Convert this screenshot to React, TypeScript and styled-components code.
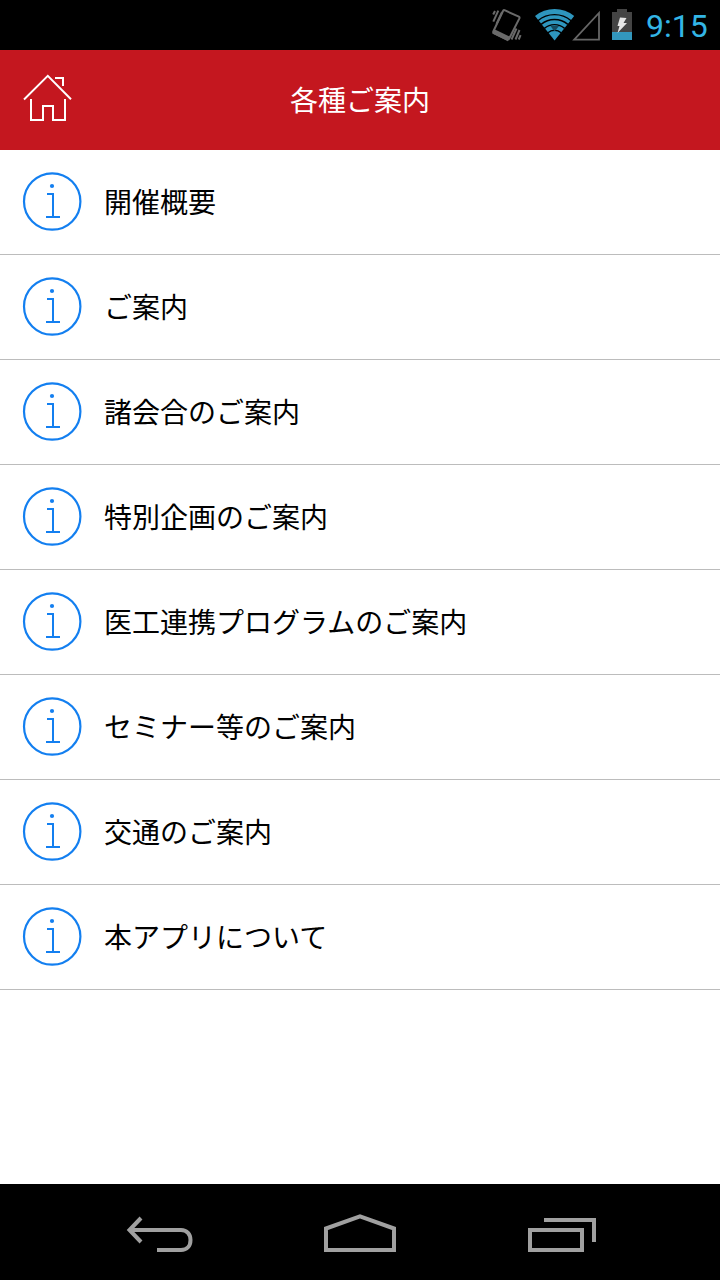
import React from "react";
import styled, { createGlobalStyle } from "styled-components";

const GlobalStyle = createGlobalStyle`
  * { box-sizing: border-box; }
  body { margin: 0; background: #fff; }
`;

const Screen = styled.div`
  width: 720px;
  height: 1280px;
  display: flex;
  flex-direction: column;
  background: #fff;
  font-family: "Noto Sans CJK JP", sans-serif;
`;

const StatusBar = styled.div`
  height: 50px;
  flex: none;
  display: flex;
  align-items: center;
  justify-content: flex-end;
  padding-right: 12px;
  background: #000;
`;

const StatusIcons = styled.svg`
  display: block;
  flex: none;
`;

const Clock = styled.time`
  width: 62px;
  margin-left: 6px;
  font: 400 32px/50px Roboto, sans-serif;
  white-space: nowrap;
  color: #33b5e5;
  padding-top: 1px;
`;

const Header = styled.header`
  height: 100px;
  flex: none;
  display: grid;
  grid-template-columns: 96px 1fr 96px;
  align-items: center;
  background: #c4171f;
  color: #fff;
`;

const HomeButton = styled.button`
  width: 96px;
  height: 100px;
  padding: 0;
  border: 0;
  background: none;
  color: inherit;
  svg { display: block; }
`;

const Title = styled.h1`
  margin: 0 0 3px;
  text-align: center;
  font-size: 28px;
  font-weight: 400;
  line-height: 40px;
`;

const Menu = styled.ul`
  flex: 1;
  margin: 0;
  padding: 0;
  list-style: none;
`;

const MenuItem = styled.li`
  height: 105px;
  display: flex;
  align-items: center;
  gap: 22px;
  padding-left: 22px;
  border-bottom: 1px solid #bcbcbc;
  color: #000;
`;

const Label = styled.span`
  margin-bottom: 2px;
  font-size: 28px;
  line-height: 40px;
`;

const InfoSvg = styled.svg`
  display: block;
  flex: none;
  margin-top: -1px;
`;

const NavBar = styled.nav`
  height: 96px;
  flex: none;
  display: flex;
  justify-content: center;
  background: #000;
`;

const NavButton = styled.button`
  width: 200px;
  height: 96px;
  display: flex;
  align-items: center;
  justify-content: center;
  padding: 0;
  border: 0;
  background: none;
  color: #a0a0a0;
`;

const items = [
  "開催概要",
  "ご案内",
  "諸会合のご案内",
  "特別企画のご案内",
  "医工連携プログラムのご案内",
  "セミナー等のご案内",
  "交通のご案内",
  "本アプリについて",
];

const InfoIcon = () => (
  <InfoSvg width="60" height="60" viewBox="0 0 60 60" fill="none" stroke="#137ff0" strokeWidth="2">
    <circle cx="30.2" cy="29.5" r="28.2" strokeWidth="2.2" />
    <circle cx="30" cy="14" r="2.1" fill="#137ff0" stroke="none" />
    <path d="M25 22H31V45M24 45H38" />
  </InfoSvg>
);

const StatusGlyphs = () => (
  <StatusIcons width="150" height="50" viewBox="490 0 150 50">
    <g fill="none" stroke="#6a6a6a" strokeWidth="2">
      <path d="M504.5 10.2 518.8 16.7Q519.9 17.3 519.4 18.4L509.2 38.5Q508.4 40 507 39.3L494 33Q492.8 32.4 493.4 31.2L503 11Q503.5 9.8 504.5 10.2Z" />
      <path d="M494.5 30.5 509 37.3 507.5 40 493.5 33Z" fill="#6a6a6a" />
      <path d="M493.2 14.5 495 11M493.3 21.7 498.3 10.6M496.5 24 502 12.3M511.5 39.5 516.5 28.5M515.5 39.5 519.5 30M518.7 39.5 520.6 35.2" />
    </g>
    <path d="M535 16A31.2 31.2 0 0 1 574.2 16L554.6 40.5Z" fill="#2e96be" />
    <g fill="none" stroke="#000" strokeWidth="1.4">
      <path d="M537.9 20.7A25.7 25.7 0 0 1 571.1 20.7" />
      <path d="M541.1 24.4A20.7 20.7 0 0 1 567.9 24.4" />
      <path d="M544.4 28.4A15.5 15.5 0 0 1 564.6 28.4" />
      <path d="M547.9 32.7A10 10 0 0 1 561.1 32.7" />
    </g>
    <path d="m550.5 26 4 5.5 4.5-5.5Z" fill="#164b60" />
    <path d="M574.2 39.6 599 13V39.6Z" fill="none" stroke="#666" strokeWidth="1.8" />
    <path d="M612 12H617V9H627V12H632V32H612Z" fill="#444" />
    <path d="M612 32H632V40H612Z" fill="#3397bd" />
    <path d="M620 17.5 626.5 18 623.5 23H627L617.5 33 619.5 26H617.5Z" fill="#e5e5e5" />
  </StatusIcons>
);

const HouseIcon = () => (
  <svg width="96" height="100" viewBox="0 50 96 100" fill="none" stroke="#fff" strokeWidth="2">
    <path d="M24 99.5 47.8 75.8 71 99.2M55 78H63V86M31 99V120H43V106H53V120H65V99" />
  </svg>
);

export default function App() {
  return (
    <Screen>
      <GlobalStyle />
      <StatusBar>
        <StatusGlyphs />
        <Clock>9:15</Clock>
      </StatusBar>
      <Header>
        <HomeButton aria-label="ホーム"><HouseIcon /></HomeButton>
        <Title>各種ご案内</Title>
      </Header>
      <Menu>
        {items.map((item) => (
          <MenuItem key={item}>
            <InfoIcon />
            <Label>{item}</Label>
          </MenuItem>
        ))}
      </Menu>
      <NavBar>
        <NavButton aria-label="戻る">
          <svg width="80" height="96" viewBox="120 1184 80 96" fill="none" stroke="currentColor" strokeWidth="4">
            <path d="M130 1230H181C187 1230 190.5 1234.5 190.5 1240C190.5 1246 187 1250 181 1250H157" />
            <path d="M141 1218 129.5 1230 141 1242" />
          </svg>
        </NavButton>
        <NavButton aria-label="ホーム">
          <svg width="80" height="96" viewBox="320 1184 80 96" fill="none" stroke="currentColor" strokeWidth="4">
            <path d="M326 1250V1228.5L360 1216.3 394 1228.5V1250Z" />
          </svg>
        </NavButton>
        <NavButton aria-label="履歴">
          <svg width="80" height="96" viewBox="520 1184 80 96" fill="none" stroke="currentColor" strokeWidth="4">
            <path d="M530 1230H582V1250H530ZM544 1220H594V1242" />
          </svg>
        </NavButton>
      </NavBar>
    </Screen>
  );
}
